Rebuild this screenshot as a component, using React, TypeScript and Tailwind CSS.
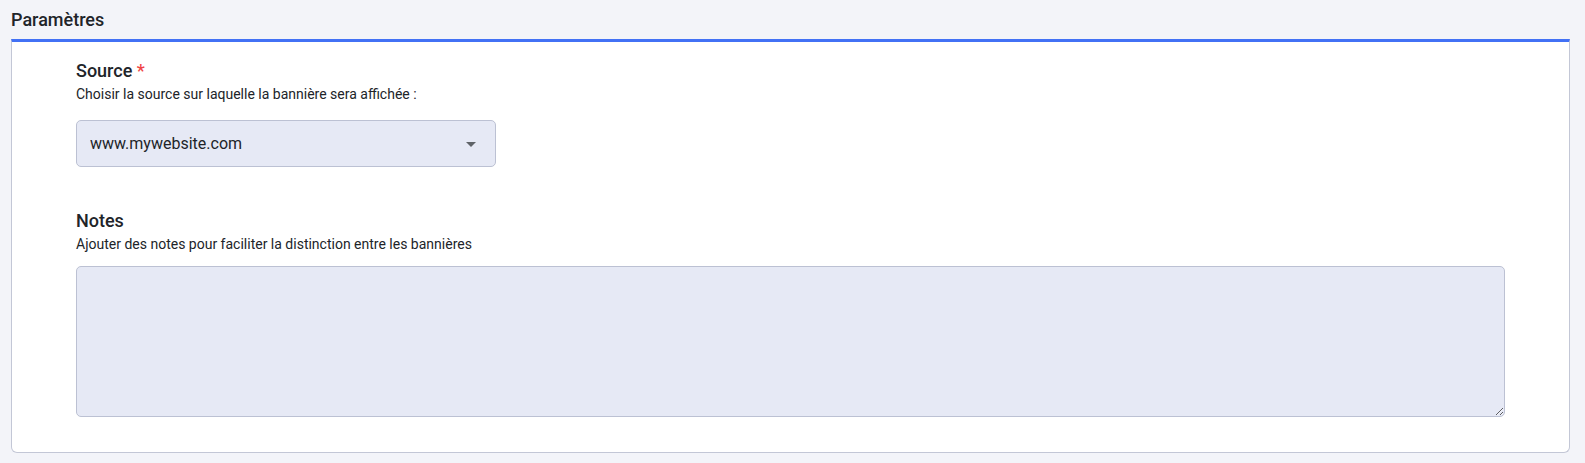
export default function App() {
  return (
    <div className="min-h-[463px] bg-[#f3f4f9] font-['Roboto',sans-serif] text-[#212429]">
      <div className="flex h-[39px] items-center px-[11px]">
        <h2 className="text-[18px] font-medium leading-6">Paramètres</h2>
      </div>

      <div className="ml-[11px] mr-[15px] rounded-b-[6px] border border-t-[3px] border-[#c3c7d6] border-t-[#4271f5] bg-white pl-16 pr-16 pt-[17px] pb-[35px]">
        {/* Source */}
        <div>
          <label className="block text-[18px] font-medium leading-6">
            Source <span className="text-[#ef4444]">*</span>
          </label>
          <p className="mt-[2px] text-[14px] leading-[18px]">
            Choisir la source sur laquelle la bannière sera affichée :
          </p>
          <div className="relative mt-[17px] w-[420px]">
            <select
              defaultValue="www.mywebsite.com"
              className="h-[47px] w-full appearance-none rounded-[5px] border border-[#bcc1d3] bg-[#e6e9f5] pl-[13px] pr-10 text-[16px] text-[#212429] outline-none"
            >
              <option>www.mywebsite.com</option>
            </select>
            <svg
              className="pointer-events-none absolute right-[20px] top-[22px]"
              width="10"
              height="5"
              viewBox="0 0 10 5"
            >
              <path d="M0 0h10L5 5z" fill="#5f6368" />
            </svg>
          </div>
        </div>

        {/* Notes */}
        <div className="mt-[42px]">
          <label className="block text-[18px] font-medium leading-6">Notes</label>
          <p className="mt-[2px] text-[14px] leading-[18px]">
            Ajouter des notes pour faciliter la distinction entre les bannières
          </p>
          <textarea className="mt-[13px] block h-[151px] w-full rounded-[5px] border border-[#bcc1d3] bg-[#e6e9f5] p-3 text-[16px] outline-none" />
        </div>
      </div>
    </div>
  )
}
